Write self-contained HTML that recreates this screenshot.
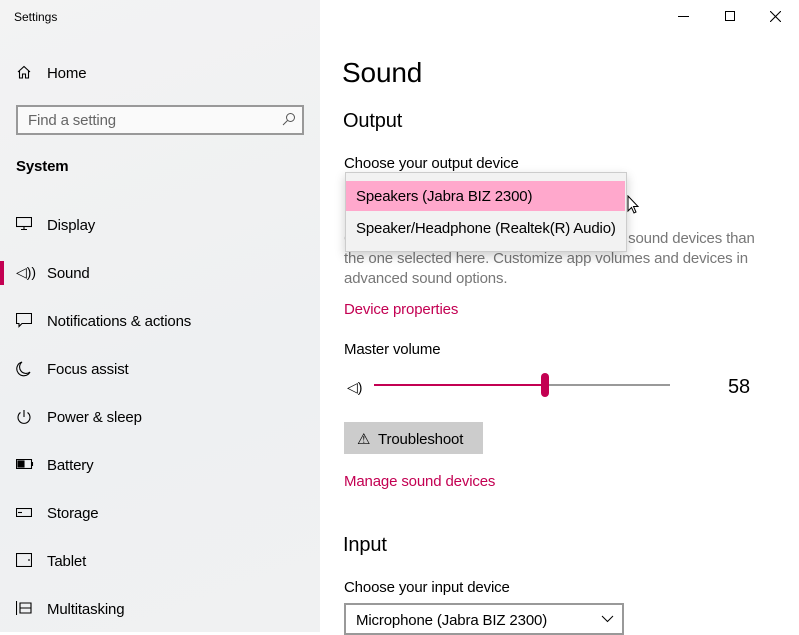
<!DOCTYPE html>
<html><head><meta charset="utf-8"><style>
*{margin:0;padding:0;box-sizing:border-box}
body{width:799px;height:632px;overflow:hidden;font-family:"Liberation Sans",sans-serif;color:#000;background:#fff;position:relative}
.side{position:absolute;left:0;top:0;width:320px;height:632px;background:linear-gradient(160deg,#f3f3f3,#eef0f2 60%,#f0f1f2)}
.a{position:absolute;white-space:nowrap}
.t{letter-spacing:-0.15px;margin-top:1px}
.nav{font-size:15px;left:47px}
.ic{position:absolute;left:16px}
.pink{color:#c30052}
</style></head><body>
<div class="side">
<div class="a" style="left:14px;top:10px;font-size:12px">Settings</div>
<svg class="ic" style="top:64px" width="16" height="16" viewBox="0 0 16 16" fill="none" stroke="#000" stroke-width="1.1"><path d="M2 8L8 2.5L14 8M3.5 6.8V14H6.5V10H9.5V14H12.5V6.8"/></svg>
<div class="a nav t" style="top:64px">Home</div>
<div class="a" style="left:16px;top:105px;width:288px;height:30px;border:2px solid #999;background:#fafafa"></div>
<div class="a t" style="left:28px;top:111px;font-size:15px;color:#666">Find a setting</div>
<svg class="a" style="left:282px;top:112px" width="14" height="14" viewBox="0 0 14 14" fill="none" stroke="#555" stroke-width="1"><circle cx="8.5" cy="5.5" r="4"/><path d="M5.5 8.5L1 13"/></svg>
<div class="a t" style="left:16px;top:157px;font-size:15px;font-weight:bold">System</div>
<svg class="ic" style="top:217px" width="16" height="14" viewBox="0 0 16 14" fill="none" stroke="#000" stroke-width="1.1"><rect x="0.5" y="0.5" width="15" height="9"/><path d="M8 10v2M5 12.5h6"/></svg>
<div class="a nav t" style="top:216px">Display</div>
<div class="a" style="left:0;top:261px;width:4px;height:24px;background:#c30052"></div>
<div class="a" style="left:16px;top:264px;font-size:14px">◁))</div>
<div class="a nav t" style="top:264px">Sound</div>
<svg class="ic" style="top:313px" width="16" height="15" viewBox="0 0 16 15" fill="none" stroke="#000" stroke-width="1.1"><path d="M0.5 0.5H15.5V10.5H6L3 13.5V10.5H0.5Z"/></svg>
<div class="a nav t" style="top:312px">Notifications &amp; actions</div>
<svg class="ic" style="top:361px" width="16" height="16" viewBox="0 0 16 16" fill="none" stroke="#000" stroke-width="1.1"><path d="M6 1A7 7 0 1 0 14 11A6 6 0 0 1 6 1Z"/></svg>
<div class="a nav t" style="top:360px">Focus assist</div>
<svg class="ic" style="top:409px" width="16" height="16" viewBox="0 0 16 16" fill="none" stroke="#000" stroke-width="1.1"><path d="M8 1V8M4.5 3.5A6 6 0 1 0 11.5 3.5"/></svg>
<div class="a nav t" style="top:408px">Power &amp; sleep</div>
<svg class="ic" style="top:459px" width="18" height="10" viewBox="0 0 18 10" fill="none" stroke="#000" stroke-width="1.1"><rect x="0.5" y="0.5" width="15" height="9"/><path d="M16.5 3v4"/><rect x="2" y="2" width="6" height="6" fill="#000"/></svg>
<div class="a nav t" style="top:456px">Battery</div>
<svg class="ic" style="top:508px" width="16" height="9" viewBox="0 0 16 9" fill="none" stroke="#000" stroke-width="1.1"><rect x="0.5" y="0.5" width="15" height="8"/><path d="M2 4.5h4"/></svg>
<div class="a nav t" style="top:504px">Storage</div>
<svg class="ic" style="top:553px" width="16" height="14" viewBox="0 0 16 14" fill="none" stroke="#000" stroke-width="1.1"><rect x="0.5" y="0.5" width="15" height="13"/><path d="M13 6v2"/></svg>
<div class="a nav t" style="top:552px">Tablet</div>
<svg class="ic" style="top:600px" width="16" height="16" viewBox="0 0 16 16" fill="none" stroke="#000" stroke-width="1.1"><path d="M0.5 1V15M4 3H15V13H4Z M4 8H15"/></svg>
<div class="a nav t" style="top:600px">Multitasking</div>
</div>
<div class="a" style="left:678px;top:16px;width:11px;height:1px;background:#000"></div>
<div class="a" style="left:725px;top:11px;width:10px;height:10px;border:1px solid #000"></div>
<svg class="a" style="left:770px;top:11px" width="11" height="11" viewBox="0 0 11 11" stroke="#000" stroke-width="1.1"><path d="M0 0L11 11M11 0L0 11"/></svg>
<div class="a t" style="left:342px;top:56px;font-size:28px">Sound</div>
<div class="a t" style="left:343px;top:109px;font-size:20px">Output</div>
<div class="a t" style="left:344px;top:154px;font-size:15px">Choose your output device</div>
<div class="a t" style="left:344px;top:228px;font-size:15px;color:#777;line-height:20px">Certain apps may be set up to use different sound devices than<br>the one selected here. Customize app volumes and devices in<br>advanced sound options.</div>
<div class="a" style="left:345px;top:172px;width:282px;height:80px;background:#f2f2f2;border:1px solid #ccc;box-shadow:0 4px 10px rgba(0,0,0,.2)"></div>
<div class="a" style="left:346px;top:181px;width:279px;height:30px;background:#ffa8cc"></div>
<div class="a t" style="left:356px;top:187px;font-size:15px">Speakers (Jabra BIZ 2300)</div>
<div class="a t" style="left:356px;top:219px;font-size:15px">Speaker/Headphone (Realtek(R) Audio)</div>
<svg class="a" style="left:627px;top:195px" width="14" height="20" viewBox="0 0 14 20"><path d="M1 1V16L4.5 12.5L7 18L9 17L6.5 11.5H11Z" fill="#fff" stroke="#000"/></svg>
<div class="a pink t" style="left:344px;top:300px;font-size:15px">Device properties</div>
<div class="a t" style="left:344px;top:340px;font-size:15px">Master volume</div>
<div class="a" style="left:347px;top:379px;font-size:14px">◁)</div>
<div class="a" style="left:374px;top:384px;width:171px;height:2px;background:#c30052"></div>
<div class="a" style="left:545px;top:384px;width:125px;height:2px;background:#999"></div>
<div class="a" style="left:541px;top:373px;width:8px;height:24px;border-radius:4px;background:#c30052"></div>
<div class="a t" style="left:728px;top:375px;font-size:20px">58</div>
<div class="a" style="left:344px;top:422px;width:139px;height:32px;background:#ccc"></div>
<div class="a t" style="left:357px;top:429px;font-size:15px">⚠&nbsp; Troubleshoot</div>
<div class="a pink t" style="left:344px;top:472px;font-size:15px">Manage sound devices</div>
<div class="a t" style="left:343px;top:533px;font-size:20px">Input</div>
<div class="a t" style="left:344px;top:578px;font-size:15px">Choose your input device</div>
<div class="a" style="left:344px;top:603px;width:280px;height:32px;border:2px solid #999"></div>
<div class="a t" style="left:356px;top:611px;font-size:15px">Microphone (Jabra BIZ 2300)</div>
<svg class="a" style="left:601px;top:615px" width="13" height="8" viewBox="0 0 13 8" fill="none" stroke="#000"><path d="M1 1L6.5 6.5L12 1"/></svg>
</body></html>
